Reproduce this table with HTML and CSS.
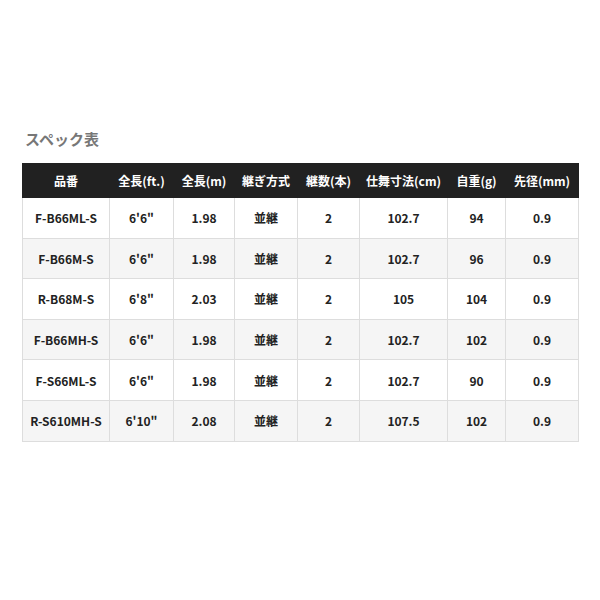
FILE: index.html
```html
<!DOCTYPE html>
<html lang="ja">
<head>
<meta charset="utf-8">
<link rel="stylesheet" href="styles.css">
</head>
<body>
<div class="wrap">
  <h2 class="title">スペック表</h2>
  <table class="spec">
    <colgroup>
      <col class="c1"><col class="c2"><col class="c3"><col class="c4"><col class="c5"><col class="c6"><col class="c7"><col class="c8">
    </colgroup>
    <thead>
      <tr><th>品番</th><th>全長(ft.)</th><th>全長(m)</th><th>継ぎ方式</th><th>継数(本)</th><th>仕舞寸法(cm)</th><th>自重(g)</th><th>先径(mm)</th></tr>
    </thead>
    <tbody>
      <tr><td>F-B66ML-S</td><td>6'6"</td><td>1.98</td><td>並継</td><td>2</td><td>102.7</td><td>94</td><td>0.9</td></tr>
      <tr><td>F-B66M-S</td><td>6'6"</td><td>1.98</td><td>並継</td><td>2</td><td>102.7</td><td>96</td><td>0.9</td></tr>
      <tr><td>R-B68M-S</td><td>6'8"</td><td>2.03</td><td>並継</td><td>2</td><td>105</td><td>104</td><td>0.9</td></tr>
      <tr><td>F-B66MH-S</td><td>6'6"</td><td>1.98</td><td>並継</td><td>2</td><td>102.7</td><td>102</td><td>0.9</td></tr>
      <tr><td>F-S66ML-S</td><td>6'6"</td><td>1.98</td><td>並継</td><td>2</td><td>102.7</td><td>90</td><td>0.9</td></tr>
      <tr><td>R-S610MH-S</td><td>6'10"</td><td>2.08</td><td>並継</td><td>2</td><td>107.5</td><td>102</td><td>0.9</td></tr>
    </tbody>
  </table>
</div>
</body>
</html>
```
FILE: styles.css
```css
html, body {
  margin: 0;
  padding: 0;
  background: #fff;
}
body {
  font-family: "Noto Sans CJK JP", "Noto Sans", sans-serif;
}
.wrap {
  padding: 130px 22px 0 22px;
}
.title {
  margin: 0 0 15px 3px;
  font-size: 15px;
  line-height: 18px;
  font-weight: 700;
  color: #777;
}
.spec {
  width: 556px;
  border-collapse: collapse;
  table-layout: fixed;
}
.c1 { width: 87px; }
.c2 { width: 64px; }
.c3 { width: 61px; }
.c4 { width: 63px; }
.c5 { width: 62px; }
.c6 { width: 88px; }
.c7 { width: 58px; }
.c8 { width: 73px; }
.spec th {
  background: #212121;
  color: #fff;
  font-size: 12px;
  font-weight: 700;
  height: 33px;
  padding: 0;
  text-align: center;
  border: 1px solid #212121;
}
.spec td {
  font-size: 12px;
  font-weight: 700;
  color: #222;
  height: 39.6px;
  padding: 0;
  text-align: center;
  border: 1px solid #ddd;
}
.spec tbody tr:nth-child(even) td {
  background: #f5f5f5;
}
```
